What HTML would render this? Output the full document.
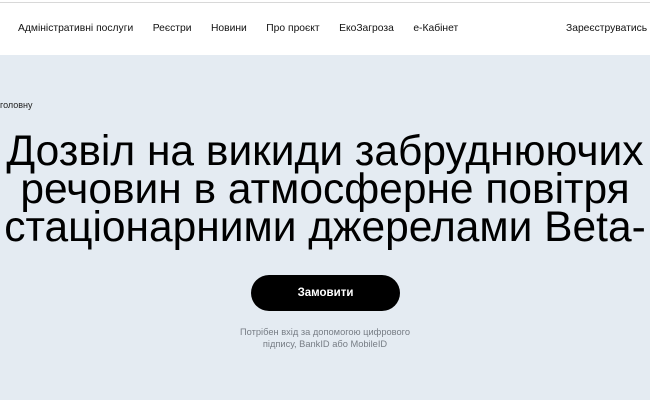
<!DOCTYPE html>
<html><head><meta charset="utf-8"><style>
*{margin:0;padding:0;box-sizing:border-box}
body{width:650px;height:420px;overflow:hidden;background:#fff;font-family:"Liberation Sans",sans-serif;position:relative}
.top{position:absolute;top:0;left:0;width:650px;height:3px;border-bottom:1px solid #d8d8d8}
.nav{position:absolute;top:23px;left:18px;font-size:10.3px;color:#111;white-space:nowrap}
.nav span{margin-right:19.5px}
.reg{position:absolute;top:23px;left:566px;font-size:10.3px;color:#111;white-space:nowrap}
.hero{position:absolute;top:55px;left:0;width:650px;height:345px;background:#e4ebf2}
.bc{position:absolute;top:100px;left:0;font-size:9px;color:#222}
h1{position:absolute;top:133px;left:-300px;width:1250px;text-align:center;font-weight:normal;font-size:42.5px;line-height:38px;color:#000;white-space:nowrap}
.btn{position:absolute;top:275px;left:251px;width:149px;height:36px;border-radius:18px;background:#000;color:#fff;font-size:11.5px;font-weight:bold;text-align:center;line-height:36px}
.note{position:absolute;top:326px;left:175px;width:300px;text-align:center;font-size:9.3px;line-height:12px;color:#777d85}
</style></head><body>
<div class="top"></div>
<div class="nav"><span>Адміністративні послуги</span><span>Реєстри</span><span>Новини</span><span>Про проєкт</span><span>ЕкоЗагроза</span><span>е-Кабінет</span></div>
<div class="reg">Зареєструватись</div>
<div class="hero"></div>
<div class="bc">головну</div>
<h1>Дозвіл на викиди забруднюючих<br>речовин в атмосферне повітря<br>стаціонарними джерелами Beta-</h1>
<div class="btn">Замовити</div>
<div class="note">Потрібен вхід за допомогою цифрового<br>підпису, BankID або MobileID</div>
</body></html>
